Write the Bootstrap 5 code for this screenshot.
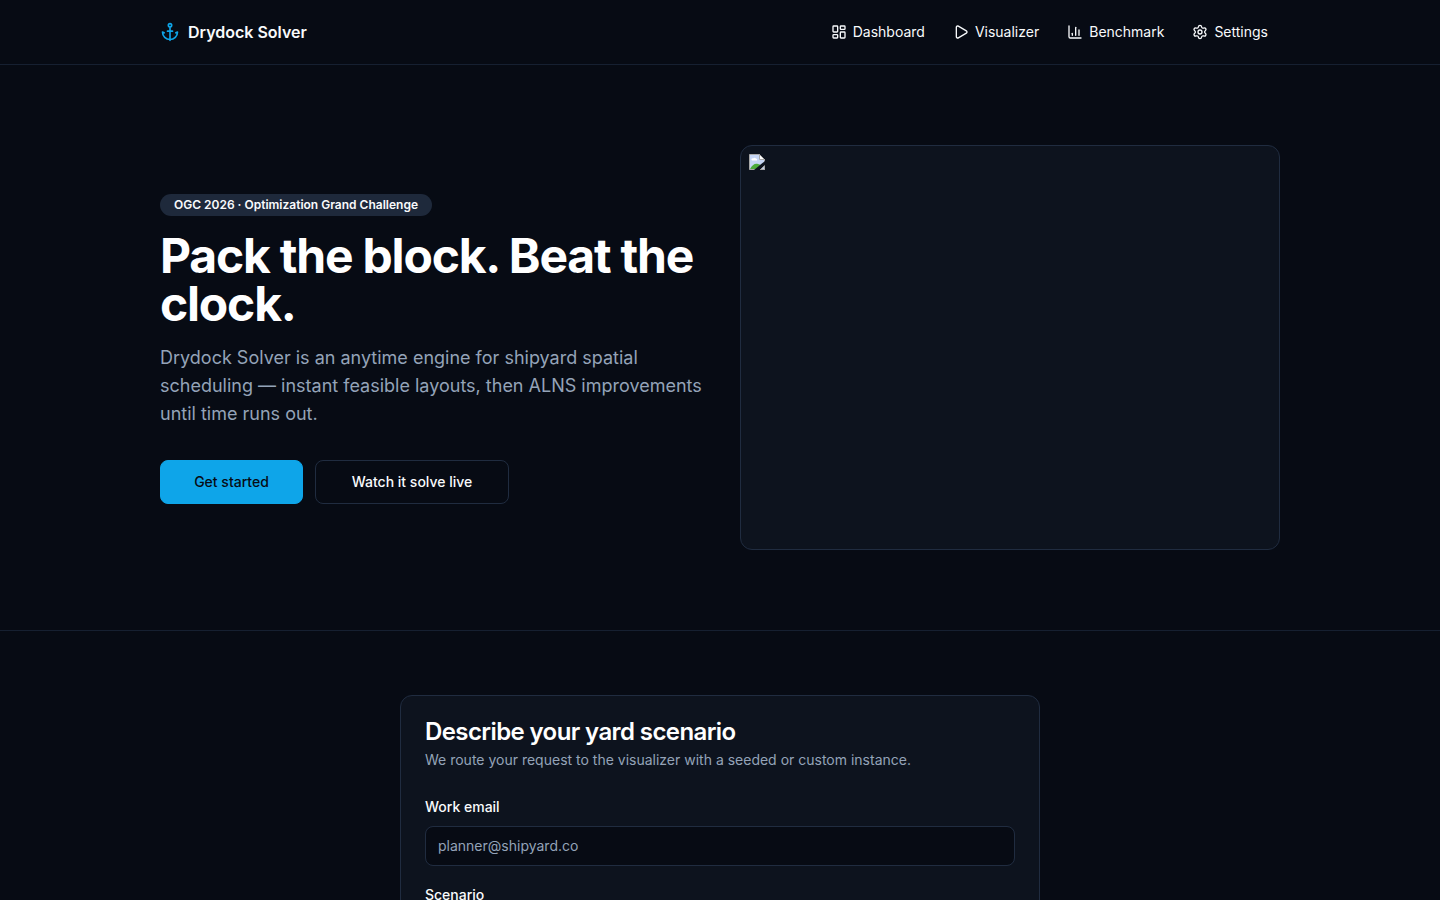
<!DOCTYPE html>
<html lang="en" data-bs-theme="dark">
<head>
<meta charset="utf-8">
<meta name="viewport" content="width=device-width, initial-scale=1">
<title>Drydock Solver</title>
<link href="https://cdn.jsdelivr.net/npm/bootstrap@5.3.0/dist/css/bootstrap.min.css" rel="stylesheet">
<style>
:root { --page: #070b14; --panel: #0d131e; --line: #202c40; --chip: #1e293b; --text: #f8fafc; --muted: #94a3b8; --accent: #0ea5e9; }
body { font-family: Inter, "Liberation Sans", sans-serif; font-size: 14px; line-height: 20px; background: var(--page); color: var(--text); overflow-x: hidden; }
svg { flex: none; }
.lucide { fill: none; stroke: currentColor; stroke-width: 2; stroke-linecap: round; stroke-linejoin: round; }
.wrap { max-width: 1168px; padding-inline: 24px; margin-inline: auto; width: 100%; }
.topbar { border-bottom: 1px solid #162031; }
.topbar .wrap { min-height: 64px; }
.brand { font-size: 16px; line-height: 24px; font-weight: 600; color: var(--text); text-decoration: none; }
.brand svg { color: var(--accent); }
.menu-link { color: var(--text); text-decoration: none; padding: 8px 12px; gap: 6px; }
.hero { border-bottom: 1px solid #162031; }
.hero .wrap { padding-block: 80px; }
.hero .row { --bs-gutter-x: 40px; --bs-gutter-y: 40px; }
.pitch { padding-top: 2px; }
.pill { background: var(--chip); font-size: 12px; line-height: 16px; font-weight: 600; padding: 3px 11px; border-radius: 11px; min-width: 272px; text-align: center; }
.headline { font-size: 48px; line-height: 48px; font-weight: 700; letter-spacing: -0.025em; margin: 16px 0; }
.intro { font-size: 18px; line-height: 28px; color: var(--muted); margin-bottom: 32px; }
@media (min-width: 1200px) { .intro { white-space: nowrap; } }
.actions { gap: 12px; }
.action { font-size: 14px; line-height: 20px; font-weight: 500; padding: 11px 24px; min-width: 194px; border-radius: 8px; --bs-btn-color: var(--text); --bs-btn-border-color: var(--line); --bs-btn-hover-color: var(--text); --bs-btn-hover-bg: var(--line); }
.action-main { --bs-btn-color: #070b14; --bs-btn-bg: var(--accent); --bs-btn-border-color: var(--accent); --bs-btn-hover-bg: #38bdf8; --bs-btn-hover-color: #070b14; min-width: 143px; }
.preview { aspect-ratio: 4 / 3; background: var(--panel); border: 1px solid var(--line); border-radius: 12px; padding: 8px; }
.panel { max-width: 640px; background: var(--panel); border: 1px solid var(--line); border-radius: 12px; padding: 24px; }
.panel-title { font-size: 24px; line-height: 24px; font-weight: 600; letter-spacing: -0.025em; margin-bottom: 6px; }
.panel-note { color: var(--muted); margin-bottom: 27px; }
.field-group { margin-bottom: 19px; }
.field-label { font-weight: 500; margin-bottom: 9px; }
.field { min-height: 40px; font-size: 14px; line-height: 20px; padding: 9px 12px; background-color: var(--page); border: 1px solid var(--line); border-radius: 8px; color: var(--text); }
.field::placeholder { color: var(--muted); }
</style>
</head>
<body>
<header class="topbar">
  <div class="wrap d-flex align-items-center justify-content-between flex-wrap">
    <a class="brand d-flex align-items-center gap-2" href="#">
      <svg class="lucide" width="20" height="20" viewBox="0 0 24 24" aria-hidden="true"><path d="M12 6v16"/><path d="m19 13 2-1a9 9 0 0 1-18 0l2 1"/><path d="M9 11h6"/><circle cx="12" cy="4" r="2"/></svg>
      Drydock Solver</a>
    <nav class="d-flex flex-wrap gap-1">
      <a class="menu-link d-flex align-items-center" href="#"><svg class="lucide" width="16" height="16" viewBox="0 0 24 24" aria-hidden="true"><rect width="7" height="9" x="3" y="3" rx="1"/><rect width="7" height="5" x="14" y="3" rx="1"/><rect width="7" height="9" x="14" y="12" rx="1"/><rect width="7" height="5" x="3" y="16" rx="1"/></svg>Dashboard</a>
      <a class="menu-link d-flex align-items-center" href="#"><svg class="lucide" width="16" height="16" viewBox="0 0 24 24" aria-hidden="true"><path d="M5 5a2 2 0 0 1 3.008-1.728l11.997 6.998a2 2 0 0 1 .003 3.458l-12 7A2 2 0 0 1 5 19z"/></svg>Visualizer</a>
      <a class="menu-link d-flex align-items-center" href="#"><svg class="lucide" width="16" height="16" viewBox="0 0 24 24" aria-hidden="true"><path d="M3 3v16a2 2 0 0 0 2 2h16"/><path d="M18 17V9"/><path d="M13 17V5"/><path d="M8 17v-3"/></svg>Benchmark</a>
      <a class="menu-link d-flex align-items-center" href="#"><svg class="lucide" width="16" height="16" viewBox="0 0 24 24" aria-hidden="true"><path d="M9.671 4.136a2.34 2.34 0 0 1 4.659 0 2.34 2.34 0 0 0 3.319 1.915 2.34 2.34 0 0 1 2.33 4.033 2.34 2.34 0 0 0 0 3.831 2.34 2.34 0 0 1-2.33 4.033 2.34 2.34 0 0 0-3.319 1.915 2.34 2.34 0 0 1-4.659 0 2.34 2.34 0 0 0-3.32-1.915 2.34 2.34 0 0 1-2.33-4.033 2.34 2.34 0 0 0 0-3.831A2.34 2.34 0 0 1 6.35 6.051a2.34 2.34 0 0 0 3.319-1.915"/><circle cx="12" cy="12" r="3"/></svg>Settings</a>
    </nav>
  </div>
</header>
<main>
  <section class="hero">
    <div class="wrap">
      <div class="row align-items-center">
        <div class="col-lg-6">
          <div class="pitch">
            <span class="pill d-inline-block align-top">OGC 2026 · Optimization Grand Challenge</span>
            <h1 class="headline">Pack the block. Beat the clock.</h1>
            <p class="intro">Drydock Solver is an anytime engine for shipyard spatial <br class="d-none d-xl-inline">scheduling — instant feasible layouts, then ALNS improvements <br class="d-none d-xl-inline">until time runs out.</p>
            <div class="actions d-flex flex-wrap">
              <button type="button" class="btn action action-main">Get started</button>
              <button type="button" class="btn action">Watch it solve live</button>
            </div>
          </div>
        </div>
        <div class="col-lg-6">
          <div class="preview">
            <svg class="d-block" width="16" height="16" viewBox="0 0 16 16" role="img" aria-label="Image unavailable"><path d="M.5.5h10l5 5v10H.5z" fill="#c6d6f5" stroke="#a8a8a8"/><path d="M3 6.500h5a1.300 1.300 0 0 0-1-2 2 2 0 0 0-3 0 1 1 0 0 0-1 2z" fill="#fff"/><path d="M1 15c2-4 5-6 8-5l3 1v4z" fill="#4cab3b"/><path d="M10.500.5v5h5z" fill="#fff" stroke="#a8a8a8"/><path d="M5 16 16 7v4l-5 5z" fill="#0d131e"/><path d="M11.500 15.500h4V12z" fill="#c6d6f5" stroke="#a8a8a8"/></svg>
          </div>
        </div>
      </div>
    </div>
  </section>
  <section class="py-5">
    <form class="panel mx-auto my-3">
      <h2 class="panel-title">Describe your yard scenario</h2>
      <p class="panel-note">We route your request to the visualizer with a seeded or custom instance.</p>
      <div class="field-group">
        <label class="field-label d-block" for="email">Work email</label>
        <input class="form-control field" id="email" type="email" placeholder="planner@shipyard.co">
      </div>
      <label class="field-label d-block" for="scenario">Scenario</label>
      <textarea class="form-control field" id="scenario" rows="4"></textarea>
    </form>
  </section>
</main>
<script src="https://cdn.jsdelivr.net/npm/bootstrap@5.3.0/dist/js/bootstrap.bundle.min.js"></script>
</body>
</html>
